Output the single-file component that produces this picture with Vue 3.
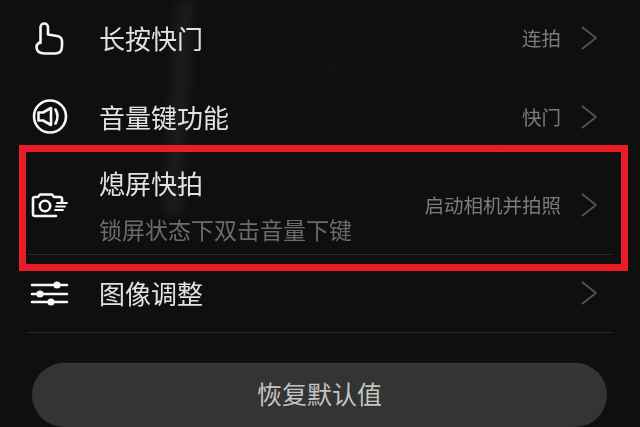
<template>
  <div class="page">
    <!-- faint wallpaper streaks behind the list -->
    <svg class="streaks" width="640" height="427" viewBox="0 0 640 427">
      <path d="M186 0 L172 215" stroke="#1b1b1b" stroke-width="18" fill="none" />
      <path d="M345 0 L480 35 L492 42 L498 120 L500 215" stroke="#1a1a18" stroke-width="2" fill="none" />
      <path d="M320 62 L336 70" stroke="#1c1c18" stroke-width="3" fill="none" />
    </svg>

    <div class="list">
      <div v-for="row in rows" :key="row.title" class="row" :class="row.cls">
        <div class="icon">
          <svg v-if="row.icon === 'hand'" width="40" height="40" viewBox="0 0 40 40">
            <path d="M10.5 24 V8.2 a3.75 3.75 0 0 1 7.5 0 V15.5 L27 17 Q32 18 32 22 V27 Q32 34.5 25 34.5 H15 Q6.5 34.5 6.5 28 Q6.5 25 10.5 23" />
          </svg>
          <svg v-else-if="row.icon === 'sound'" width="40" height="40" viewBox="0 0 40 40">
            <circle cx="20" cy="19.5" r="16" />
            <path d="M8.5 15.5 H13 L21 11 V28 L13 23.5 H8.5 Z" />
            <path d="M25.5 12.5 Q29.5 19.5 25.5 26.5" />
          </svg>
          <svg v-else-if="row.icon === 'camera'" width="40" height="40" viewBox="0 0 40 40">
            <path d="M32 16 V13 Q32 11 30 11 H24 L22 8.5 H10 L8 11 H5 Q3 11 3 13 V28 Q3 30 5 30 H26" />
            <circle cx="15" cy="20" r="5.2" />
            <path d="M27 17 H37 M26 20.5 H35 M25 24 H33" stroke-width="1.8" />
          </svg>
          <svg v-else width="40" height="40" viewBox="0 0 40 40">
            <path d="M2 11 H37 M2 20 H37 M2 28 H37" />
            <circle class="dot" cx="27" cy="11" r="3.6" />
            <circle class="dot" cx="10" cy="20" r="3.6" />
            <circle class="dot" cx="21" cy="28" r="3.6" />
          </svg>
        </div>
        <div class="text">
          <div class="title">{{ row.title }}</div>
          <div v-if="row.sub" class="sub">{{ row.sub }}</div>
        </div>
        <span v-if="row.value" class="value">{{ row.value }}</span>
        <svg class="chevron" width="16" height="24" viewBox="0 0 16 24">
          <path d="M1 1 L15 12 L1 23" />
        </svg>
      </div>
    </div>

    <div class="reset"><span>恢复默认值</span></div>

    <!-- red annotation drawn over the screenshot -->
    <div class="mark"></div>
  </div>
</template>

<script setup>
const rows = [
  { icon: 'hand', title: '长按快门', value: '连拍', cls: 'first' },
  { icon: 'sound', title: '音量键功能', value: '快门', cls: 'second' },
  { icon: 'camera', title: '熄屏快拍', sub: '锁屏状态下双击音量下键', value: '启动相机并拍照', cls: 'tall' },
  { icon: 'sliders', title: '图像调整', cls: 'last' }
]
</script>

<style scoped>
.page {
  position: relative;
  width: 640px;
  height: 427px;
  overflow: hidden;
  background: #0f0f10;
  font-family: "Noto Sans CJK SC", "Liberation Sans", sans-serif;
}

.streaks {
  position: absolute;
  left: 0;
  top: 0;
  filter: blur(4px);
}

.list {
  position: relative;
  margin: 0 28px;
  filter: blur(0.35px);
}

.row {
  display: flex;
  align-items: center;
  padding: 0 15px 0 2px;
}

.first { height: 77px; }
.second { height: 80px; }

.tall {
  height: 98px;
  border-bottom: 1px solid #26302a;
  box-sizing: border-box;
}

.last {
  height: 78px;
  border-bottom: 1px solid #2c2c2c;
  box-sizing: border-box;
}

.icon {
  width: 40px;
  height: 40px;
  margin-right: 29px;
  flex: none;
}

.icon svg {
  display: block;
  fill: none;
  stroke: #f6f6f6;
  stroke-width: 2.6;
  stroke-linecap: round;
  stroke-linejoin: round;
}

.icon .dot {
  fill: #f6f6f6;
  stroke: none;
}

.text {
  flex: 1;
  min-width: 0;
}

.title {
  font-size: 26px;
  line-height: 36px;
  color: #e2e2e2;
  margin-bottom: 2px;
}

.second .title {
  margin-bottom: 0;
}

.sub {
  margin-top: 10px;
  font-size: 23px;
  line-height: 36px;
  color: #6b6b6b;
}

.tall .title {
  margin-bottom: 0;
}

.tall .text {
  margin-top: 1px;
}

.value {
  font-size: 19.5px;
  color: #7c7c7c;
  margin-right: 20px;
  margin-bottom: 2px;
}

.chevron {
  flex: none;
  fill: none;
  stroke: #565656;
  stroke-width: 1.6;
  margin-bottom: 1px;
}

.reset {
  position: relative;
  margin: 30px 33px 0 32px;
  height: 64px;
  padding-bottom: 5px;
  border-radius: 32px;
  background: #343434;
  border-top: 1px solid #3e3e3e;
  box-sizing: border-box;
  color: #c4c4c4;
  font-size: 25px;
  display: flex;
  align-items: center;
  justify-content: center;
}

.mark {
  position: absolute;
  left: 19px;
  top: 145px;
  width: 609px;
  height: 126px;
  box-sizing: border-box;
  border: 7px solid #ea1c2a;
}
</style>

<style>
html, body {
  background: #0f0f10;
}
</style>
